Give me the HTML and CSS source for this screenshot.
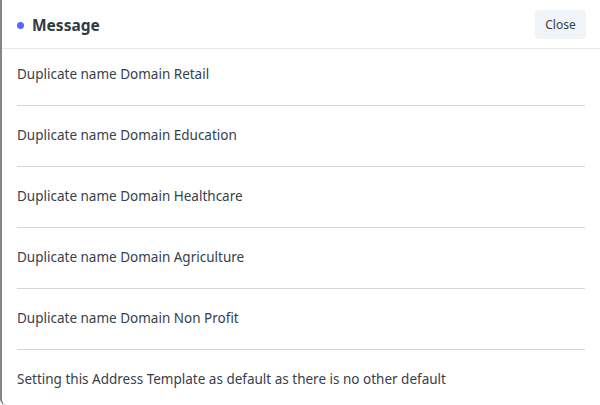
FILE: index.html
```html
<!DOCTYPE html>
<html lang="en">
<head>
  <meta charset="UTF-8" />
  <meta name="viewport" content="width=device-width, initial-scale=1.0"/>
  <title>Message</title>
  <link rel="stylesheet" href="styles.css">
</head>
<body>
  <div class="modal">
    <header class="modal-header">
      <h4 class="modal-title"><span class="indicator"></span>Message</h4>
      <button class="btn-close">Close</button>
    </header>
    <main class="modal-body">
      <div class="msg">Duplicate name Domain Retail</div>
      <div class="msg">Duplicate name Domain Education</div>
      <div class="msg">Duplicate name Domain Healthcare</div>
      <div class="msg">Duplicate name Domain Agriculture</div>
      <div class="msg">Duplicate name Domain Non Profit</div>
      <div class="msg">Setting this Address Template as default as there is no other default</div>
    </main>
  </div>
</body>
</html>
```

FILE: styles.css
```css
html, body {
  margin: 0;
  padding: 0;
  height: 100%;
}

body {
  font-family: "Noto Sans", sans-serif;
  color: #36414c;
  background: #fff;
}

.modal {
  box-sizing: border-box;
  height: 405px;
  overflow: hidden;
  border-left: 2px solid #80858a;
  border-bottom-left-radius: 6px;
  background: #fff;
}

.modal-header {
  display: flex;
  align-items: center;
  justify-content: space-between;
  height: 48px;
  padding: 0 14px 0 15px;
  border-bottom: 1px solid #e6e9ec;
}

.modal-title {
  display: flex;
  align-items: center;
  margin: 2px 0 0;
  font-size: 15.5px;
  font-weight: bold;
  color: #313b44;
}

.indicator {
  width: 7px;
  height: 7px;
  border-radius: 50%;
  background: #5e64ff;
  margin-right: 8px;
}

.btn-close {
  font-family: inherit;
  font-size: 12px;
  color: #36414c;
  background: #f0f4f7;
  border: none;
  border-radius: 4px;
  width: 51px;
  height: 29px;
  padding: 0;
  cursor: pointer;
}

.modal-body {
  padding: 0 15px 0 15px;
}

.msg {
  font-size: 13.5px;
  line-height: 20px;
  padding: 19px 0 21px;
  border-bottom: 1px solid #d1d8dd;
}

.msg:first-child {
  padding-top: 15px;
  padding-bottom: 21px;
}

.msg:last-child {
  border-bottom: none;
}
```
